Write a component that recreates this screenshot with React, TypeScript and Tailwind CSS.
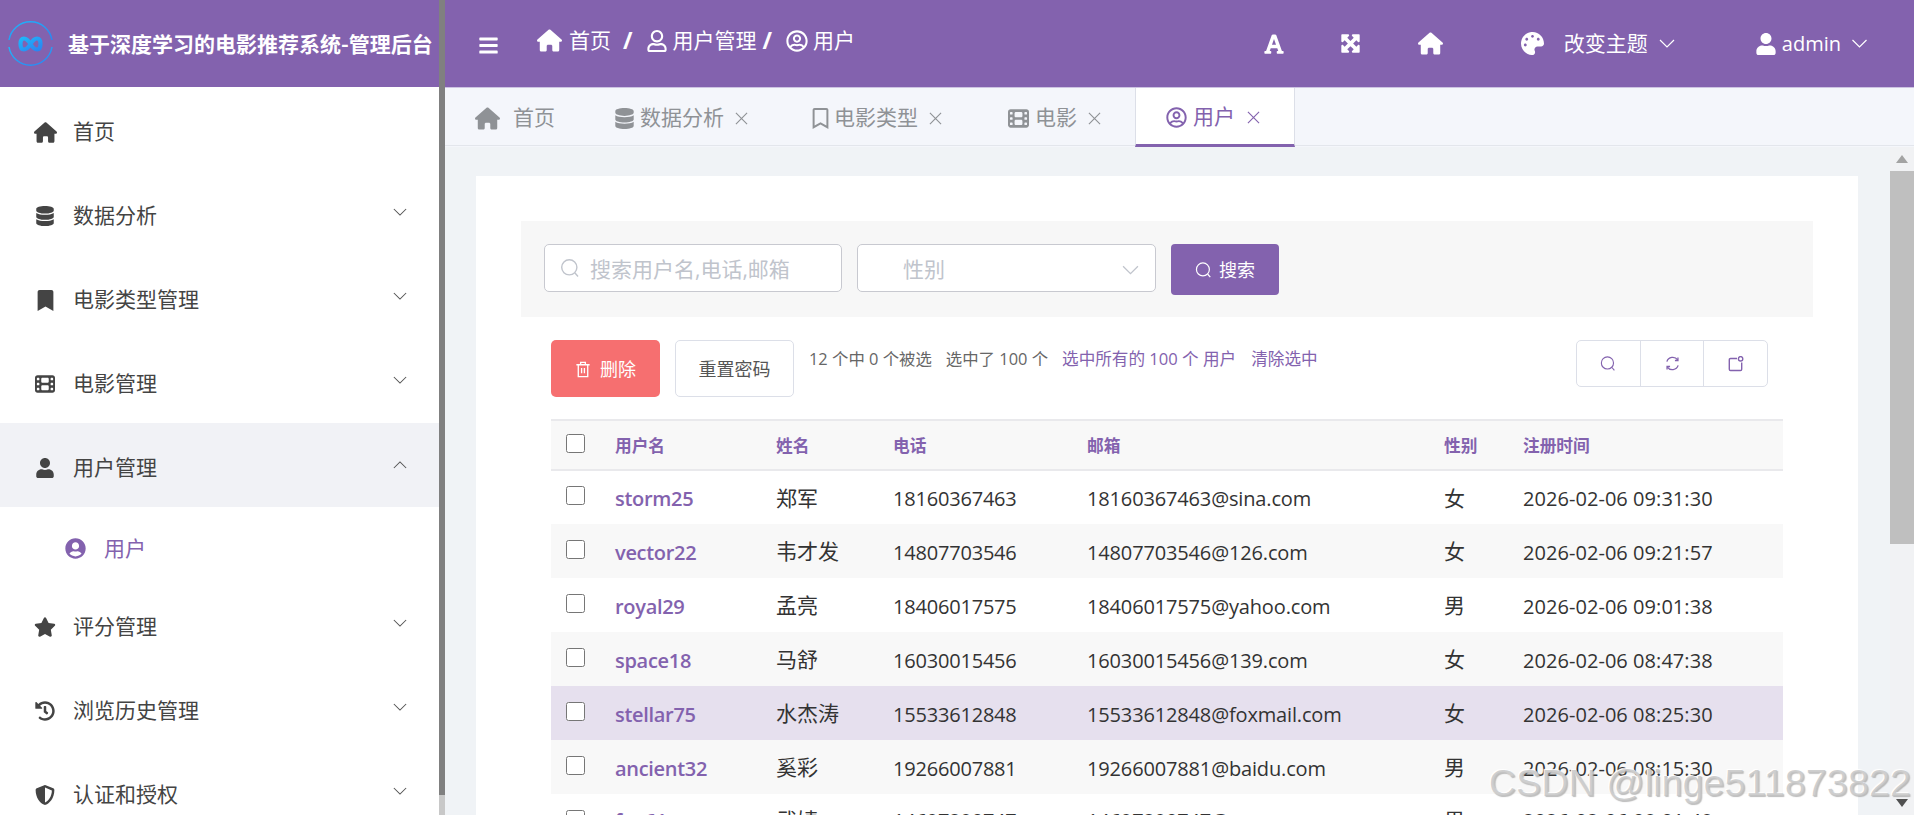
import React from "react";
import {
  FaDatabase, FaBookmark, FaUser, FaUserCircle, FaStar, FaHistory, FaShieldAlt,
  FaFont, FaPalette, FaBars, FaRegUser, FaRegUserCircle, FaRegBookmark,
} from "react-icons/fa";
import { FaHouse, FaFilm, FaMaximize } from "react-icons/fa6";

const PURPLE = "text-[#8362ae]";

function Chevron({ up = false, className = "" }: { up?: boolean; className?: string }) {
  return (
    <svg viewBox="0 0 16 10" className={className} fill="none" stroke="currentColor" strokeWidth="1.2">
      <polyline points={up ? "1,9 8,2 15,9" : "1,1 8,8 15,1"} />
    </svg>
  );
}

function Cross({ className = "" }: { className?: string }) {
  return (
    <svg viewBox="0 0 14 14" className={className} fill="none" stroke="currentColor" strokeWidth="1.2">
      <path d="M1 1 L13 13 M13 1 L1 13" />
    </svg>
  );
}

function SearchIcon({ className = "" }: { className?: string }) {
  return (
    <svg viewBox="0 0 20 20" className={className} fill="none" stroke="currentColor" strokeWidth="1.4">
      <circle cx="9.3" cy="9.3" r="7.6" />
      <path d="M15 15 L18 18.5" />
    </svg>
  );
}

function Logo() {
  return (
    <svg viewBox="0 0 45 45" className="w-[45px] h-[45px] shrink-0" fill="none">
      <defs>
        <linearGradient id="lg" x1="0" y1="0" x2="1" y2="1">
          <stop offset="0" stopColor="#1fb6fa" />
          <stop offset="1" stopColor="#2a85f2" />
        </linearGradient>
      </defs>
      <path d="M1 19 A21.8 21.8 0 0 1 44 19" stroke="url(#lg)" strokeWidth="1.5" />
      <path d="M44 26 A21.8 21.8 0 0 1 1 26" stroke="url(#lg)" strokeWidth="1.5" />
      <path
        d="M22.5 23 C20 19 18 17.5 16 17.5 C13.6 17.5 12.5 20 12.5 23 C12.5 26 13.6 28.5 16 28.5 C18 28.5 20 27 22.5 23 C25 19 27 17.5 29 17.5 C31.4 17.5 32.5 20 32.5 23 C32.5 26 31.4 28.5 29 28.5 C27 28.5 25 27 22.5 23 Z"
        stroke="url(#lg)"
        strokeWidth="4.2"
      />
    </svg>
  );
}

type Menu = { label: string; icon: React.ReactNode; arrow?: "down" | "up"; active?: boolean };

const menus: Menu[] = [
  { label: "首页", icon: <FaHouse className="text-[23px]" /> },
  { label: "数据分析", icon: <FaDatabase className="text-[20px]" />, arrow: "down" },
  { label: "电影类型管理", icon: <FaBookmark className="text-[21px]" />, arrow: "down" },
  { label: "电影管理", icon: <FaFilm className="text-[20px]" />, arrow: "down" },
  { label: "用户管理", icon: <FaUser className="text-[20px]" />, arrow: "up", active: true },
];
const menus2: Menu[] = [
  { label: "评分管理", icon: <FaStar className="text-[22px]" />, arrow: "down" },
  { label: "浏览历史管理", icon: <FaHistory className="text-[20px]" />, arrow: "down" },
  { label: "认证和授权", icon: <FaShieldAlt className="text-[20px]" />, arrow: "down" },
];

function MenuRow({ m }: { m: Menu }) {
  return (
    <div className={`h-[84px] pt-[6px] flex items-center shrink-0 ${m.active ? "bg-[#f1f2f6]" : ""}`}>
      <div className="w-[73px] flex justify-center pl-[17px] shrink-0">{m.icon}</div>
      <span className="flex-1">{m.label}</span>
      {m.arrow && (
        <Chevron up={m.arrow === "up"} className="w-[14px] h-[9px] mr-[32px] -mt-[8px] text-[#555]" />
      )}
    </div>
  );
}

const tabs = [
  { label: "数据分析", icon: <FaDatabase className="text-[21px]" />, cls: "w-[198px] pl-[29px]", gap: "ml-[5px]" },
  { label: "电影类型", icon: <FaRegBookmark className="text-[21px]" />, cls: "w-[195px] pl-[27px]", gap: "ml-[3px]" },
  { label: "电影", icon: <FaFilm className="text-[21px]" />, cls: "w-[157px] pl-[30px]", gap: "ml-[6px]" },
];

const rows = [
  ["storm25", "郑军", "18160367463", "18160367463@sina.com", "女", "2026-02-06 09:31:30"],
  ["vector22", "韦才发", "14807703546", "14807703546@126.com", "女", "2026-02-06 09:21:57"],
  ["royal29", "孟亮", "18406017575", "18406017575@yahoo.com", "男", "2026-02-06 09:01:38"],
  ["space18", "马舒", "16030015456", "16030015456@139.com", "女", "2026-02-06 08:47:38"],
  ["stellar75", "水杰涛", "15533612848", "15533612848@foxmail.com", "女", "2026-02-06 08:25:30"],
  ["ancient32", "奚彩", "19266007881", "19266007881@baidu.com", "男", "2026-02-06 08:15:30"],
  ["fox61", "武婧", "14697290747", "14697290747@qq.com", "男", "2026-02-06 08:01:48"],
];

const headers = ["用户名", "姓名", "电话", "邮箱", "性别", "注册时间"];

export default function App() {
  return (
    <div className="relative w-screen h-screen overflow-hidden flex bg-white font-['Open_Sans','Noto_Sans_CJK_SC',sans-serif] text-[21px] text-[#444]">
      {/* sidebar */}
      <aside className="w-[439px] shrink-0 flex flex-col overflow-hidden">
        <div className="h-[87px] shrink-0 bg-[#8362ae] flex items-center pl-[8px] text-white">
          <Logo />
          <span className="ml-[15px] font-bold whitespace-nowrap text-[21px] font-['Noto_Sans_CJK_SC',sans-serif]">基于深度学习的电影推荐系统-管理后台</span>
        </div>
        <nav className="flex flex-col">
          {menus.map((m) => <MenuRow key={m.label} m={m} />)}
          <div className={`h-[75px] pt-[8px] flex items-center shrink-0 ${PURPLE}`}>
            <FaUserCircle className="text-[21px] ml-[65px]" />
            <span className="ml-[18px]">用户</span>
          </div>
          {menus2.map((m) => <MenuRow key={m.label} m={m} />)}
        </nav>
      </aside>
      {/* sidebar scrollbar */}
      <div className="w-[6px] shrink-0 flex flex-col bg-[#c8c8c8]">
        <div className="h-[795px] bg-[#808080]" />
      </div>

      {/* main */}
      <main className="flex-1 min-w-0 flex flex-col">
        <header className="h-[87px] shrink-0 bg-[#8362ae] text-white flex items-center pb-[3px]">
          <FaBars className="text-[21px] ml-[33px] mt-[6px]" />
          <div className="flex items-center ml-[38px] -mt-[3px]">
            <FaHouse className="text-[25px]" />
            <span className="ml-[7px]">首页</span>
            <span className="ml-[12px] font-bold text-[23px] leading-none">/</span>
            <FaRegUser className="text-[22px] ml-[13px]" />
            <span className="ml-[5px]">用户管理</span>
            <span className="ml-[6px] font-bold text-[23px] leading-none">/</span>
            <FaRegUserCircle className="text-[22px] ml-[14px]" />
            <span className="ml-[5px]">用户</span>
          </div>
          <div className="ml-auto flex items-center mr-[46px] mt-[3px]">
            <FaFont className="text-[22px]" />
            <FaMaximize className="text-[21px] ml-[55px]" />
            <FaHouse className="text-[25px] ml-[57px]" />
            <FaPalette className="text-[23px] ml-[78px]" />
            <span className="ml-[20px]">改变主题</span>
            <Chevron className="w-[16px] h-[10px] ml-[11px]" />
            <FaUser className="text-[22px] ml-[80px]" />
            <span className="ml-[5px] text-[20px]">admin</span>
            <Chevron className="w-[17px] h-[10px] ml-[10px]" />
          </div>
        </header>

        {/* tabs */}
        <div className="h-[60px] shrink-0 bg-[#f4f6fb] border-t border-[#cdc3e2] flex text-[#8f9296] relative">
          <div className="absolute left-0 right-0 bottom-[1px] h-[1px] bg-[#e3e6ec]" />
          <div className="w-[140px] pl-[30px] flex items-center gap-[13px] pt-[1px] relative">
            <FaHouse className="text-[25px] shrink-0" />
            <span>首页</span>
          </div>
          {tabs.map((t) => (
            <div key={t.label} className={`${t.cls} flex items-center pt-[1px] relative`}>
              {t.icon}
              <span className={t.gap}>{t.label}</span>
              <Cross className="w-[13px] h-[13px] ml-[11px]" />
            </div>
          ))}
          <div className={`w-[160px] h-[59px] pl-[30px] flex items-center pt-[2px] relative bg-white border-x border-[#dcdfe8] border-b-[3px] border-b-[#8362ae] ${PURPLE}`}>
            <FaRegUserCircle className="text-[21px]" />
            <span className="ml-[6px]">用户</span>
            <Cross className="w-[13px] h-[13px] ml-[12px]" />
          </div>
        </div>

        {/* body */}
        <div className="flex-1 min-h-0 flex bg-[#f0f3f6]">
          <div className="flex-1 min-w-0 pl-[31px] pr-[32px] pt-[29px] overflow-hidden">
            <div className="bg-white px-[45px] pt-[45px] h-[800px]">
              {/* search */}
              <div className="h-[96px] bg-[#f7f7f7] pl-[23px] pt-[23px] flex items-start">
                <div className="w-[298px] h-[48px] pt-[3px] bg-white border border-[#c8c9d0] rounded-[5px] flex items-center pl-[15px] text-[#c0c4cc]">
                  <SearchIcon className="w-[20px] h-[20px] -mt-[3px]" />
                  <span className="ml-[10px]">搜索用户名,电话,邮箱</span>
                </div>
                <div className="w-[299px] h-[48px] pt-[3px] ml-[15px] bg-white border border-[#c8c9d0] rounded-[5px] flex items-center pl-[45px] pr-[16px] text-[#c0c4cc]">
                  <span className="flex-1">性别</span>
                  <Chevron className="w-[17px] h-[11px] mt-[2px]" />
                </div>
                <div className="w-[108px] h-[51px] pt-[2px] ml-[15px] bg-[#8362ae] rounded-[4px] text-white flex items-center justify-center text-[18px]">
                  <SearchIcon className="w-[17px] h-[18px] -mt-[2px]" />
                  <span className="ml-[7px]">搜索</span>
                </div>
              </div>

              {/* toolbar */}
              <div className="mt-[23px] h-[57px] ml-[30px] flex items-start">
                <div className="w-[109px] h-[57px] pt-[1px] bg-[#f66f70] rounded-[5px] text-white flex items-center justify-center text-[18px]">
                  <svg viewBox="0 0 16 18" className="w-[16px] h-[17px]" fill="none" stroke="currentColor" strokeWidth="1.4">
                    <path d="M1 4 H15 M5.5 4 V1.5 H10.5 V4 M3 4 V16.5 H13 V4 M6.5 7.5 V13 M9.5 7.5 V13" />
                  </svg>
                  <span className="ml-[9px]">删除</span>
                </div>
                <div className="w-[119px] h-[57px] pt-[1px] ml-[15px] bg-white border border-[#dcdfe8] rounded-[5px] flex items-center justify-center text-[18px] text-[#555]">
                  重置密码
                </div>
                <div className="ml-[15px] text-[16.4px] text-[#666] leading-[37px] whitespace-nowrap flex">
                  <span>12 个中 0 个被选</span>
                  <span className="ml-[14px]">选中了 100 个</span>
                  <span className={`ml-[14px] text-[16.6px] ${PURPLE}`}>选中所有的 100 个 用户</span>
                  <span className={`ml-[15px] text-[16.6px] ${PURPLE}`}>清除选中</span>
                </div>
                <div className={`ml-auto mr-[45px] w-[192px] h-[47px] flex border border-[#dcdfe8] rounded-[5px] ${PURPLE}`}>
                  <div className="flex-1 flex items-center justify-center border-r border-[#dcdfe8]">
                    <SearchIcon className="w-[16px] h-[17px]" />
                  </div>
                  <div className="flex-1 flex items-center justify-center border-r border-[#dcdfe8]">
                    <svg viewBox="0 0 16 16" className="w-[15px] h-[15px]" fill="none" stroke="currentColor" strokeWidth="1.4">
                      <path d="M2 6 A6.5 6.5 0 0 1 13.5 4.2 M14 10 A6.5 6.5 0 0 1 2.5 11.8" />
                      <path d="M13.8 1.5 V4.8 H10.6 M2.2 14.5 V11.2 H5.4" />
                    </svg>
                  </div>
                  <div className="flex-1 flex items-center justify-center">
                    <svg viewBox="0 0 16 16" className="w-[16px] h-[16px]" fill="none" stroke="currentColor" strokeWidth="1.4">
                      <path d="M9 2.5 H2.5 A1.2 1.2 0 0 0 1.3 3.7 V13.3 A1.2 1.2 0 0 0 2.5 14.5 H12.5 A1.2 1.2 0 0 0 13.7 13.3 V6.5" />
                      <circle cx="12.6" cy="2.8" r="2.2" />
                    </svg>
                  </div>
                </div>
              </div>

              {/* table */}
              <table className="mt-[22px] ml-[30px] w-[1232px] table-fixed border-collapse">
                <colgroup>
                  <col className="w-[64px]" />
                  <col className="w-[161px]" />
                  <col className="w-[117px]" />
                  <col className="w-[194px]" />
                  <col className="w-[357px]" />
                  <col className="w-[79px]" />
                  <col />
                </colgroup>
                <thead>
                  <tr className="h-[50px] bg-[#f8f8f8] border-y-2 border-[#e9e9ec]">
                    <th className="p-0 pl-[15px] text-left align-middle">
                      <input type="checkbox" className="block w-[19px] h-[19px] m-0 -mt-[3px]" readOnly />
                    </th>
                    {headers.map((h) => (
                      <th key={h} className={`p-0 pt-[2px] text-left text-[16.7px] font-bold ${PURPLE}`}>{h}</th>
                    ))}
                  </tr>
                </thead>
                <tbody>
                  {rows.map((r, i) => {
                    const pad = i === 6 ? "pt-0" : "pt-[3px]";
                    const padCjk = i === 6 ? "pt-0" : "pt-[2px]";
                    return (
                      <tr key={r[0]} className={`h-[54px] ${i === 4 ? "bg-[#e6e0ee]" : i % 2 === 1 ? "bg-[#f8f8f8]" : "bg-white"}`}>
                        <td className="p-0 pl-[15px] align-middle">
                          <input type="checkbox" className="block w-[19px] h-[19px] m-0 -mt-[4px]" readOnly />
                        </td>
                        <td className={`p-0 ${pad} font-semibold text-[20px] tracking-[-0.3px] ${PURPLE}`}>{r[0]}</td>
                        <td className={`p-0 ${padCjk} text-[#333]`}>{r[1]}</td>
                        <td className={`p-0 ${pad} text-[#333] text-[20px] tracking-[-0.2px]`}>{r[2]}</td>
                        <td className={`p-0 ${pad} text-[#333] text-[20px] tracking-[-0.15px]`}>{r[3]}</td>
                        <td className={`p-0 ${padCjk} text-[#333]`}>{r[4]}</td>
                        <td className={`p-0 ${pad} text-[#333] text-[20px] tracking-[0.05px]`}>{r[5]}</td>
                      </tr>
                    );
                  })}
                </tbody>
              </table>
            </div>
          </div>
          {/* page scrollbar */}
          <div className="w-[24px] shrink-0 flex flex-col items-stretch bg-[#f1f2f4]">
            <div className="h-[24px] flex items-center justify-center">
              <svg viewBox="0 0 12 8" className="w-[12px] h-[8px] text-[#a3a3a3]" fill="currentColor"><path d="M6 0 L12 8 H0 Z" /></svg>
            </div>
            <div className="h-[373px] bg-[#bfbfbf]" />
            <div className="flex-1" />
            <div className="h-[24px] flex items-center justify-center">
              <svg viewBox="0 0 12 8" className="w-[12px] h-[8px] text-[#505050]" fill="currentColor"><path d="M6 8 L12 0 H0 Z" /></svg>
            </div>
          </div>
        </div>
      </main>

      {/* watermark */}
      <div className="absolute left-[1489px] top-[762px] whitespace-nowrap text-[37.8px] leading-[42px] font-['Liberation_Sans',sans-serif] text-[#c4c4c4d0] [text-shadow:-1px_-1px_1px_#ffffff,1px_1px_1px_#8f8f8f99]">
        CSDN @linge511873822
      </div>
    </div>
  );
}
